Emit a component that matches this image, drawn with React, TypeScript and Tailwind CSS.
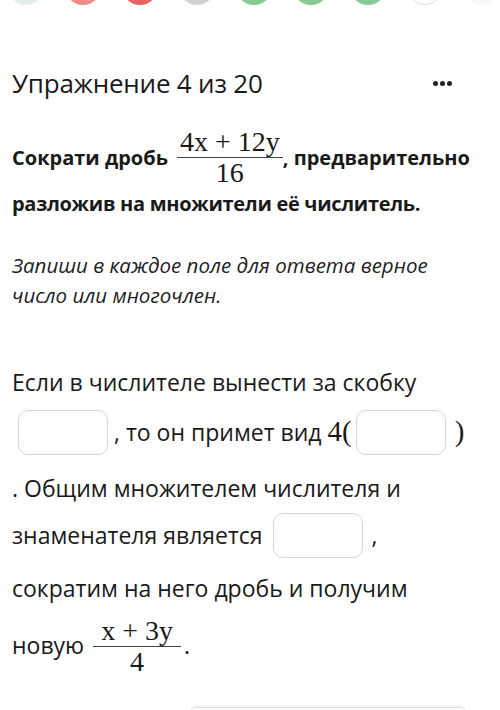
const CIRCLES = [
  'bg-[#e4eee6]',
  'bg-[#f28a88]',
  'bg-[#e86462]',
  'bg-[#d2d2d2]',
  'bg-[#86c993]',
  'bg-[#86c993]',
  'bg-[#86c993]',
  'bg-white border border-[#dcdcdc]',
  'bg-[#f7f7f7]',
];

function Frac({ num, den, pad = 'px-[3px]' }: { num: string; den: string; pad?: string }) {
  return (
    <span className="inline-flex flex-col items-center font-['Liberation_Serif',serif] font-normal text-[#1a1a1a]">
      <span className={`${pad} text-[28px] leading-[30px]`}>{num}</span>
      <span className="h-[1px] w-full bg-[#444]" />
      <span className={`${pad} text-[28px] leading-[30px]`}>{den}</span>
    </span>
  );
}

function Field() {
  return <span className="inline-block h-[45px] w-[90px] rounded-[10px] border border-[#d6d6d6] bg-white" />;
}

export default function App() {
  return (
    <div className="relative h-[710px] w-[500px] overflow-hidden bg-white font-['Open_Sans',sans-serif] text-[#1a1a1a]">
      <div className="-mt-[31px] flex gap-[21px] pl-[8px]">
        {CIRCLES.map((c, i) => (
          <div key={i} className={`h-[36px] w-[36px] shrink-0 rounded-full ${c}`} />
        ))}
      </div>

      <div className="mt-[63px] flex h-[30px] items-center justify-between pl-[12px] pr-[48px]">
        <h1 className="text-[26px] leading-[30px] tracking-[-0.2px]">Упражнение 4 из 20</h1>
        <div className="flex gap-[2px]">
          <span className="h-[5px] w-[5px] rounded-full bg-[#222]" />
          <span className="h-[5px] w-[5px] rounded-full bg-[#222]" />
          <span className="h-[5px] w-[5px] rounded-full bg-[#222]" />
        </div>
      </div>

      <div className="mt-[29px] px-[12px] text-[20px] font-bold">
        <div className="flex h-[61px] items-center">
          <span>Сократи дробь</span>
          <span className="ml-[9px]">
            <Frac num="4x + 12y" den="16" />
          </span>
          <span>, предварительно</span>
        </div>
        <div className="flex h-[32px] items-center tracking-[-0.3px]">разложив на множители её числитель.</div>
      </div>

      <div className="mt-[30px] px-[12px] text-[20.5px] italic leading-[30px] text-[#222]">
        <div>Запиши в каждое поле для ответа верное</div>
        <div>число или многочлен.</div>
      </div>

      <div className="mt-[52px] px-[12px] text-[23px]">
        <div className="flex h-[40px] items-center">Если в числителе вынести за скобку</div>
        <div className="mt-[5px] flex h-[50px] items-center">
          <span className="ml-[6px] mr-[6px] flex">
            <Field />
          </span>
          <span>, то он примет вид</span>
          <span className="ml-[6px] font-['Liberation_Serif',serif] text-[29px]">4(</span>
          <span className="ml-[4px] mr-[9px] flex">
            <Field />
          </span>
          <span className="font-['Liberation_Serif',serif] text-[29px]">)</span>
        </div>
        <div className="mt-[8px] flex h-[46px] items-center">. Общим множителем числителя и</div>
        <div className="flex h-[48px] items-center">
          <span>знаменателя является</span>
          <span className="ml-[10px] mr-[9px] flex">
            <Field />
          </span>
          <span>,</span>
        </div>
        <div className="mt-[4px] flex h-[50px] items-center">сократим на него дробь и получим</div>
        <div className="mt-[2px] flex h-[61px] items-center">
          <span>новую</span>
          <span className="ml-[9px]">
            <Frac num="x + 3y" den="4" pad="px-[8px]" />
          </span>
          <span className="ml-[3px]">.</span>
        </div>
      </div>

      <div className="absolute left-[190px] top-[707px] h-[20px] w-[276px] rounded-t-[6px] border-t border-[#dedede] shadow-[0_-1px_3px_rgba(0,0,0,0.06)]" />
    </div>
  );
}
